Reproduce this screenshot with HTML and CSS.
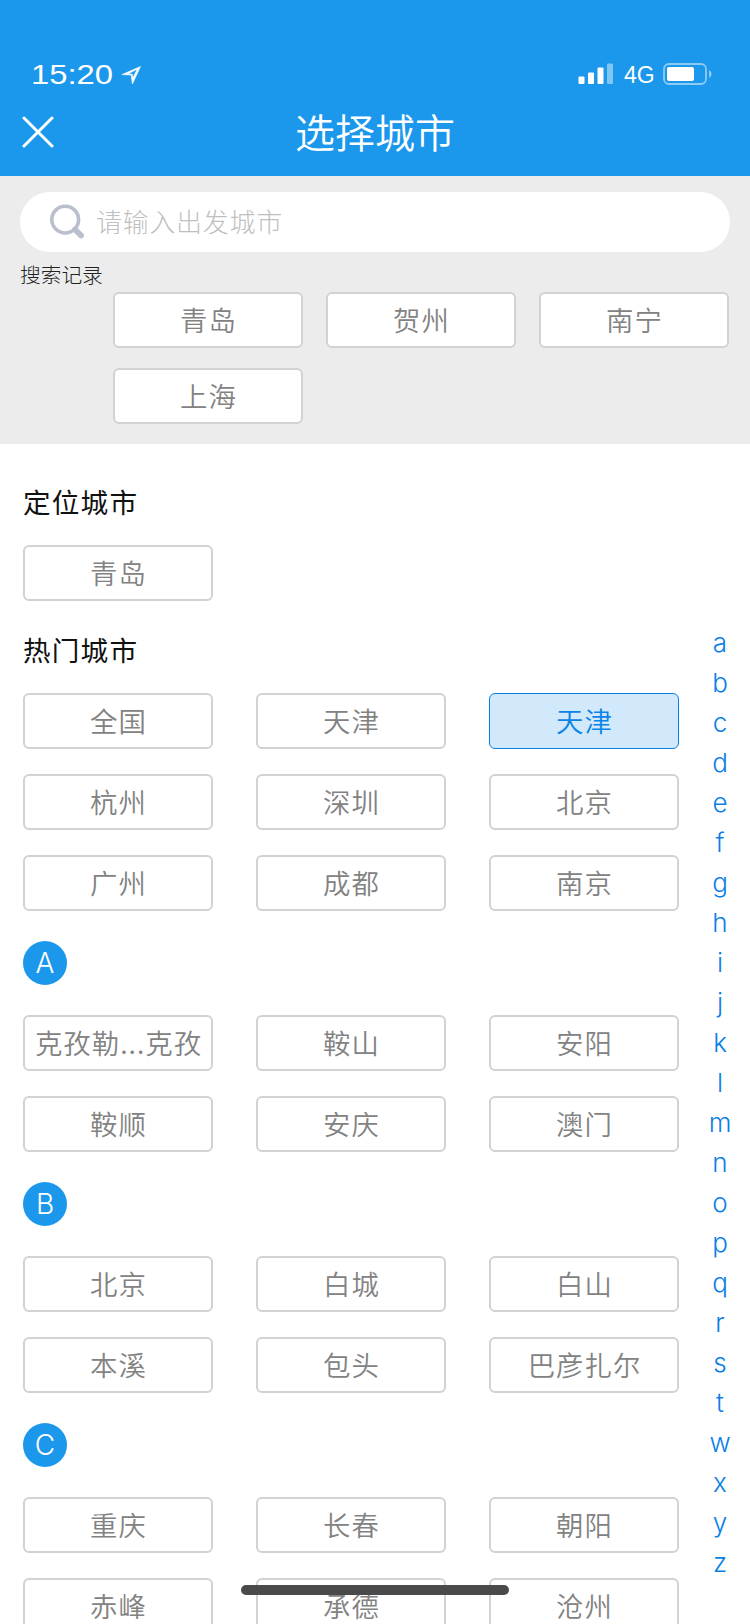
FILE: index.html
```html
<!DOCTYPE html>
<html lang="zh-CN">
<head>
  <meta charset="UTF-8">
  <meta name="viewport" content="width=device-width, initial-scale=1.0">
  <title>选择城市</title>
  <link rel="stylesheet" href="styles.css">
</head>
<body>
  <header>
    <div class="status-bar">
      <span class="time">15:20</span>
      <svg class="location" width="22" height="22" viewBox="0 0 22 22">
        <path d="M20.5 1.5 L2 9.6 L11.2 10 L12.4 19 Z M17.3 4 L8 9 L12.2 9.2 L12.9 12.8 Z" fill="#fff" fill-rule="evenodd" stroke="#fff" stroke-width="0.6"/>
      </svg>
      <svg class="signal" width="36" height="22" viewBox="0 0 36 22">
        <rect x="0.5" y="13.5" width="6" height="7.5" rx="1" fill="#fff"/>
        <rect x="10" y="9.5" width="6" height="11.5" rx="1" fill="#fff"/>
        <rect x="19.5" y="4.5" width="6" height="16.5" rx="1" fill="#fff"/>
        <rect x="29" y="0.5" width="6" height="20.5" rx="1" fill="#fff" opacity="0.45"/>
      </svg>
      <span class="network">4G</span>
      <svg class="battery" width="50" height="22" viewBox="0 0 50 22">
        <rect x="1" y="1" width="42" height="20" rx="5" fill="none" stroke="#fff" stroke-width="1.8" opacity="0.5"/>
        <rect x="4" y="4" width="27" height="14" rx="2" fill="#fff"/>
        <path d="M46 7 Q48.6 8.5 48.6 11 Q48.6 13.5 46 15 Z" fill="#fff" opacity="0.5"/>
      </svg>
    </div>
    <div class="title-bar">
      <svg class="close" width="32" height="32" viewBox="0 0 32 32">
        <path d="M2 2 L30 30 M30 2 L2 30" stroke="#fff" stroke-width="3" stroke-linecap="round"/>
      </svg>
      <h1>选择城市</h1>
    </div>
  </header>

  <section class="search">
    <div class="search-box">
      <svg width="36" height="38" viewBox="0 0 36 38">
        <circle cx="15.2" cy="16.6" r="13.4" fill="none" stroke="#b9bfcc" stroke-width="3.6"/>
        <path d="M25 26.5 L31 32.5" stroke="#b9bfcc" stroke-width="5.8" stroke-linecap="round"/>
      </svg>
      <span>请输入出发城市</span>
    </div>
    <p class="history-label">搜索记录</p>
    <div class="history">
      <div class="city">青岛</div>
      <div class="city">贺州</div>
      <div class="city">南宁</div>
      <div class="city">上海</div>
    </div>
  </section>

  <main>
    <h2>定位城市</h2>
    <div class="cities">
      <div class="city">青岛</div>
    </div>

    <h2>热门城市</h2>
    <div class="cities">
      <div class="city">全国</div>
      <div class="city">天津</div>
      <div class="city active">天津</div>
      <div class="city">杭州</div>
      <div class="city">深圳</div>
      <div class="city">北京</div>
      <div class="city">广州</div>
      <div class="city">成都</div>
      <div class="city">南京</div>
    </div>

    <h3>A</h3>
    <div class="cities">
      <div class="city">克孜勒...克孜</div>
      <div class="city">鞍山</div>
      <div class="city">安阳</div>
      <div class="city">鞍顺</div>
      <div class="city">安庆</div>
      <div class="city">澳门</div>
    </div>

    <h3>B</h3>
    <div class="cities">
      <div class="city">北京</div>
      <div class="city">白城</div>
      <div class="city">白山</div>
      <div class="city">本溪</div>
      <div class="city">包头</div>
      <div class="city">巴彦扎尔</div>
    </div>

    <h3>C</h3>
    <div class="cities">
      <div class="city">重庆</div>
      <div class="city">长春</div>
      <div class="city">朝阳</div>
      <div class="city">赤峰</div>
      <div class="city">承德</div>
      <div class="city">沧州</div>
    </div>
  </main>

  <nav class="letters">
    <a>a</a>
    <a>b</a>
    <a>c</a>
    <a>d</a>
    <a>e</a>
    <a>f</a>
    <a>g</a>
    <a>h</a>
    <a>i</a>
    <a>j</a>
    <a>k</a>
    <a>l</a>
    <a>m</a>
    <a>n</a>
    <a>o</a>
    <a>p</a>
    <a>q</a>
    <a>r</a>
    <a>s</a>
    <a>t</a>
    <a>w</a>
    <a>x</a>
    <a>y</a>
    <a>z</a>
  </nav>

  <div class="home-indicator"></div>
</body>
</html>
```
FILE: styles.css
```css
* {
  box-sizing: border-box;
}
body {
  font-family: "Noto Sans CJK SC", sans-serif;
  margin: 0;
  height: 1624px;
  overflow: hidden;
  position: relative;
  background-color: #fff;
}
h1, h2, h3, p {
  margin: 0;
}

/* header */
header {
  height: 176px;
  padding-top: 58px;
  background-color: #1b97ec;
  color: #fff;
}
.status-bar {
  display: flex;
  align-items: center;
  height: 32px;
  padding: 0 37px 0 31px;
  font-family: "Liberation Sans", sans-serif;
}
.time {
  width: 89px;
  padding-top: 1px;
  font-size: 28px;
  transform: scaleX(1.17);
  transform-origin: left;
}
.location {
  margin-top: 3px;
}
.signal {
  margin-left: auto;
}
.network {
  width: 32px;
  margin: 2px 7px 0 10px;
  font-size: 23px;
}
.title-bar {
  display: flex;
  align-items: center;
  height: 84px;
  padding-left: 22px;
}
.title-bar h1 {
  flex: 1;
  padding: 0 54px 2px 0;
  text-align: center;
  font-size: 40px;
  font-weight: 350;
  line-height: 60px;
}

/* search */
.search {
  height: 268px;
  padding: 16px 20px 0;
  background-color: #ececec;
}
.search-box {
  display: flex;
  align-items: center;
  height: 60px;
  padding-left: 30px;
  border-radius: 30px;
  background-color: #fff;
  color: #bfbfbf;
  font-size: 26px;
  font-weight: 300;
  letter-spacing: 0.7px;
}
.search-box span {
  margin-left: 10px;
  padding-bottom: 3px;
}
.history-label {
  height: 40px;
  padding-top: 7px;
  font-size: 20.7px;
  font-weight: 300;
  line-height: 30px;
  color: #222;
}
.history {
  display: grid;
  grid-template-columns: repeat(3, 190px);
  gap: 20px 23px;
  margin-left: 93px;
}

/* city list */
.city {
  height: 56px;
  padding-left: 1px;
  border: 2px solid #d2d2d2;
  border-radius: 6px;
  background-color: #fff;
  color: #828282;
  font-size: 27.4px;
  font-weight: 350;
  letter-spacing: 1px;
  line-height: 51px;
  text-align: center;
  white-space: nowrap;
}
.city.active {
  border: 1px solid #0a80e0;
  background-color: #d1e9fb;
  color: #0a84e6;
  line-height: 53px;
}
main {
  padding: 9px 0 0 23px;
}
h2 {
  height: 92px;
  padding-top: 28px;
  font-size: 27.6px;
  font-weight: 400;
  letter-spacing: 1.2px;
  line-height: 40px;
  color: #111;
}
h3 {
  width: 44px;
  height: 44px;
  margin: 30px 0;
  border-radius: 50%;
  background-color: #1b97ec;
  color: #fff;
  font-family: Inter, sans-serif;
  font-size: 28px;
  font-weight: 350;
  line-height: 45px;
  text-align: center;
}
.cities {
  display: grid;
  grid-template-columns: repeat(3, 190px);
  gap: 25px 43px;
}

/* letter index on the right */
.letters {
  position: absolute;
  top: 623px;
  right: 10px;
  width: 40px;
}
.letters a {
  display: block;
  height: 40px;
  color: #0a80e6;
  font-family: Inter, sans-serif;
  font-size: 26px;
  font-weight: 350;
  line-height: 40px;
  text-align: center;
}

.home-indicator {
  position: absolute;
  left: 241px;
  top: 1585px;
  width: 268px;
  height: 10px;
  border-radius: 5px;
  background-color: #4a4a4a;
}
```
